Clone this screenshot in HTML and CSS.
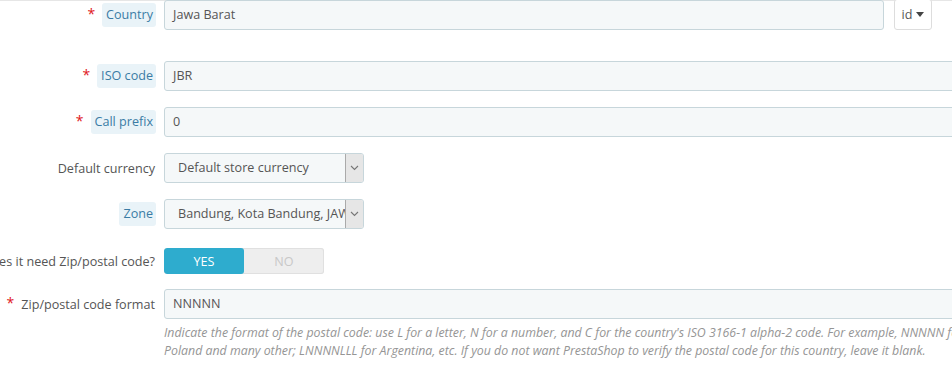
FILE: index.html
```html
<!DOCTYPE html>
<html>
<head>
<meta charset="utf-8">
<link rel="stylesheet" href="styles.css">
</head>
<body>
<div class="form">
  <div class="row row-country">
    <div class="label"><span class="req">*</span><span class="tip">Country</span></div>
    <div class="field field-lang">
      <div class="input">Jawa Barat</div>
      <div class="lang-btn">id <span class="caret"></span></div>
    </div>
  </div>
  <div class="row">
    <div class="label"><span class="req">*</span><span class="tip">ISO code</span></div>
    <div class="field"><div class="input wide">JBR</div></div>
  </div>
  <div class="row">
    <div class="label"><span class="req">*</span><span class="tip">Call prefix</span></div>
    <div class="field"><div class="input wide">0</div></div>
  </div>
  <div class="row">
    <div class="label"><span class="plain">Default currency</span></div>
    <div class="field">
      <div class="select"><span class="sel-text">Default store currency</span><span class="sel-arrow"><svg width="9" height="6" viewBox="0 0 9 6"><path d="M1 1l3.5 3.5L8 1" fill="none" stroke="#777" stroke-width="1.1"/></svg></span></div>
    </div>
  </div>
  <div class="row row-zone">
    <div class="label"><span class="tip">Zone</span></div>
    <div class="field">
      <div class="select"><span class="sel-text">Bandung, Kota Bandung, JAWA BARAT</span><span class="sel-arrow"><svg width="9" height="6" viewBox="0 0 9 6"><path d="M1 1l3.5 3.5L8 1" fill="none" stroke="#777" stroke-width="1.1"/></svg></span></div>
    </div>
  </div>
  <div class="row row-switch">
    <div class="label"><span class="plain">Does it need Zip/postal code?</span></div>
    <div class="field">
      <div class="switch"><span class="sw-yes">YES</span><span class="sw-no">NO</span></div>
    </div>
  </div>
  <div class="row row-zip">
    <div class="label"><span class="req">*</span><span class="plain">Zip/postal code format</span></div>
    <div class="field"><div class="input wide">NNNNN</div></div>
  </div>
  <div class="row row-help">
    <div class="label-empty"></div>
    <p class="help">Indicate the format of the postal code: use L for a letter, N for a number, and C for the country's ISO 3166-1 alpha-2 code. For example, NNNNN for Poland and many other; LNNNNLLL for Argentina, etc. If you do not want PrestaShop to verify the postal code for this country, leave it blank.</p>
  </div>
</div>
</body>
</html>
```

FILE: styles.css
```css
html, body {
  margin: 0;
  padding: 0;
  background: #fff;
  overflow: hidden;
  width: 952px;
  height: 380px;
}
body {
  font-family: "Open Sans", "Noto Sans", sans-serif;
  font-size: 12.6px;
  color: #555;
}
.form {
  border-top: 1px solid #e6e6e6;
  width: 1100px;
}
.row {
  display: grid;
  grid-template-columns: 156px 1fr;
  column-gap: 8px;
  align-items: center;
  margin-bottom: 16px;
}
.row-country {
  margin-top: -1px;
  margin-bottom: 31px;
}
.row-zone { margin-bottom: 17px; }
.row-switch { margin-bottom: 13px; }
.row-zip { margin-bottom: 0; }
.label {
  display: flex;
  justify-content: flex-end;
  align-items: center;
  white-space: nowrap;
  height: 30px;
  color: #555;
}
.req {
  color: #e0161c;
  font-size: 14px;
  margin-right: 7px;
  position: relative;
  top: -2px;
}
.tip {
  background: #e9f3f8;
  color: #3a7ca5;
  padding: 3px 3px 3px 4px;
  border-radius: 3px;
  line-height: 18px;
}
.plain {
  padding-right: 1px;
  color: #555;
}
.field {
  display: flex;
  align-items: center;
}
.field-lang {
  gap: 10px;
}
.input {
  box-sizing: border-box;
  height: 30px;
  line-height: 28px;
  padding: 0 8px;
  border: 1px solid #c7d6db;
  border-radius: 3px;
  background: #f5f8f9;
  color: #555;
}
.field-lang .input { width: 720px; }
.input.wide { width: 830px; }
.lang-btn {
  box-sizing: border-box;
  width: 38px;
  height: 31px;
  margin-top: -1px;
  border: 1px solid #ddd;
  border-radius: 3px;
  background: #fff;
  display: flex;
  align-items: center;
  justify-content: center;
  gap: 4px;
  color: #555;
}
.caret {
  width: 0;
  height: 0;
  border-left: 4px solid transparent;
  border-right: 4px solid transparent;
  border-top: 5px solid #444;
}
.select {
  box-sizing: border-box;
  width: 200px;
  height: 30px;
  border: 1px solid #c7d6db;
  border-radius: 3px;
  background: #f5f8f9;
  display: flex;
  align-items: stretch;
  overflow: hidden;
}
.sel-text {
  flex: 1;
  padding-left: 13px;
  line-height: 28px;
  white-space: nowrap;
  overflow: hidden;
  color: #555;
}
.sel-arrow {
  width: 17px;
  background: #e6e6e6;
  border-left: 1px solid #aaa;
  display: flex;
  align-items: center;
  justify-content: center;
}
.switch {
  display: flex;
  width: 160px;
  height: 26px;
  border-radius: 3px;
  overflow: hidden;
  background: #eee;
  box-shadow: inset 0 0 0 1px #e0e0e0;
}
.sw-yes, .sw-no {
  flex: 1;
  display: flex;
  align-items: center;
  justify-content: center;
}
.sw-yes {
  background: #2eacce;
  color: #fff;
  border-radius: 3px;
}
.sw-no {
  color: #c8c8c8;
}
.row-help { margin: 0; }
.help {
  margin: 5px 0 0 0;
  width: 820px;
  font-style: italic;
  font-size: 12.35px;
  line-height: 18px;
  color: #959595;
}
```
